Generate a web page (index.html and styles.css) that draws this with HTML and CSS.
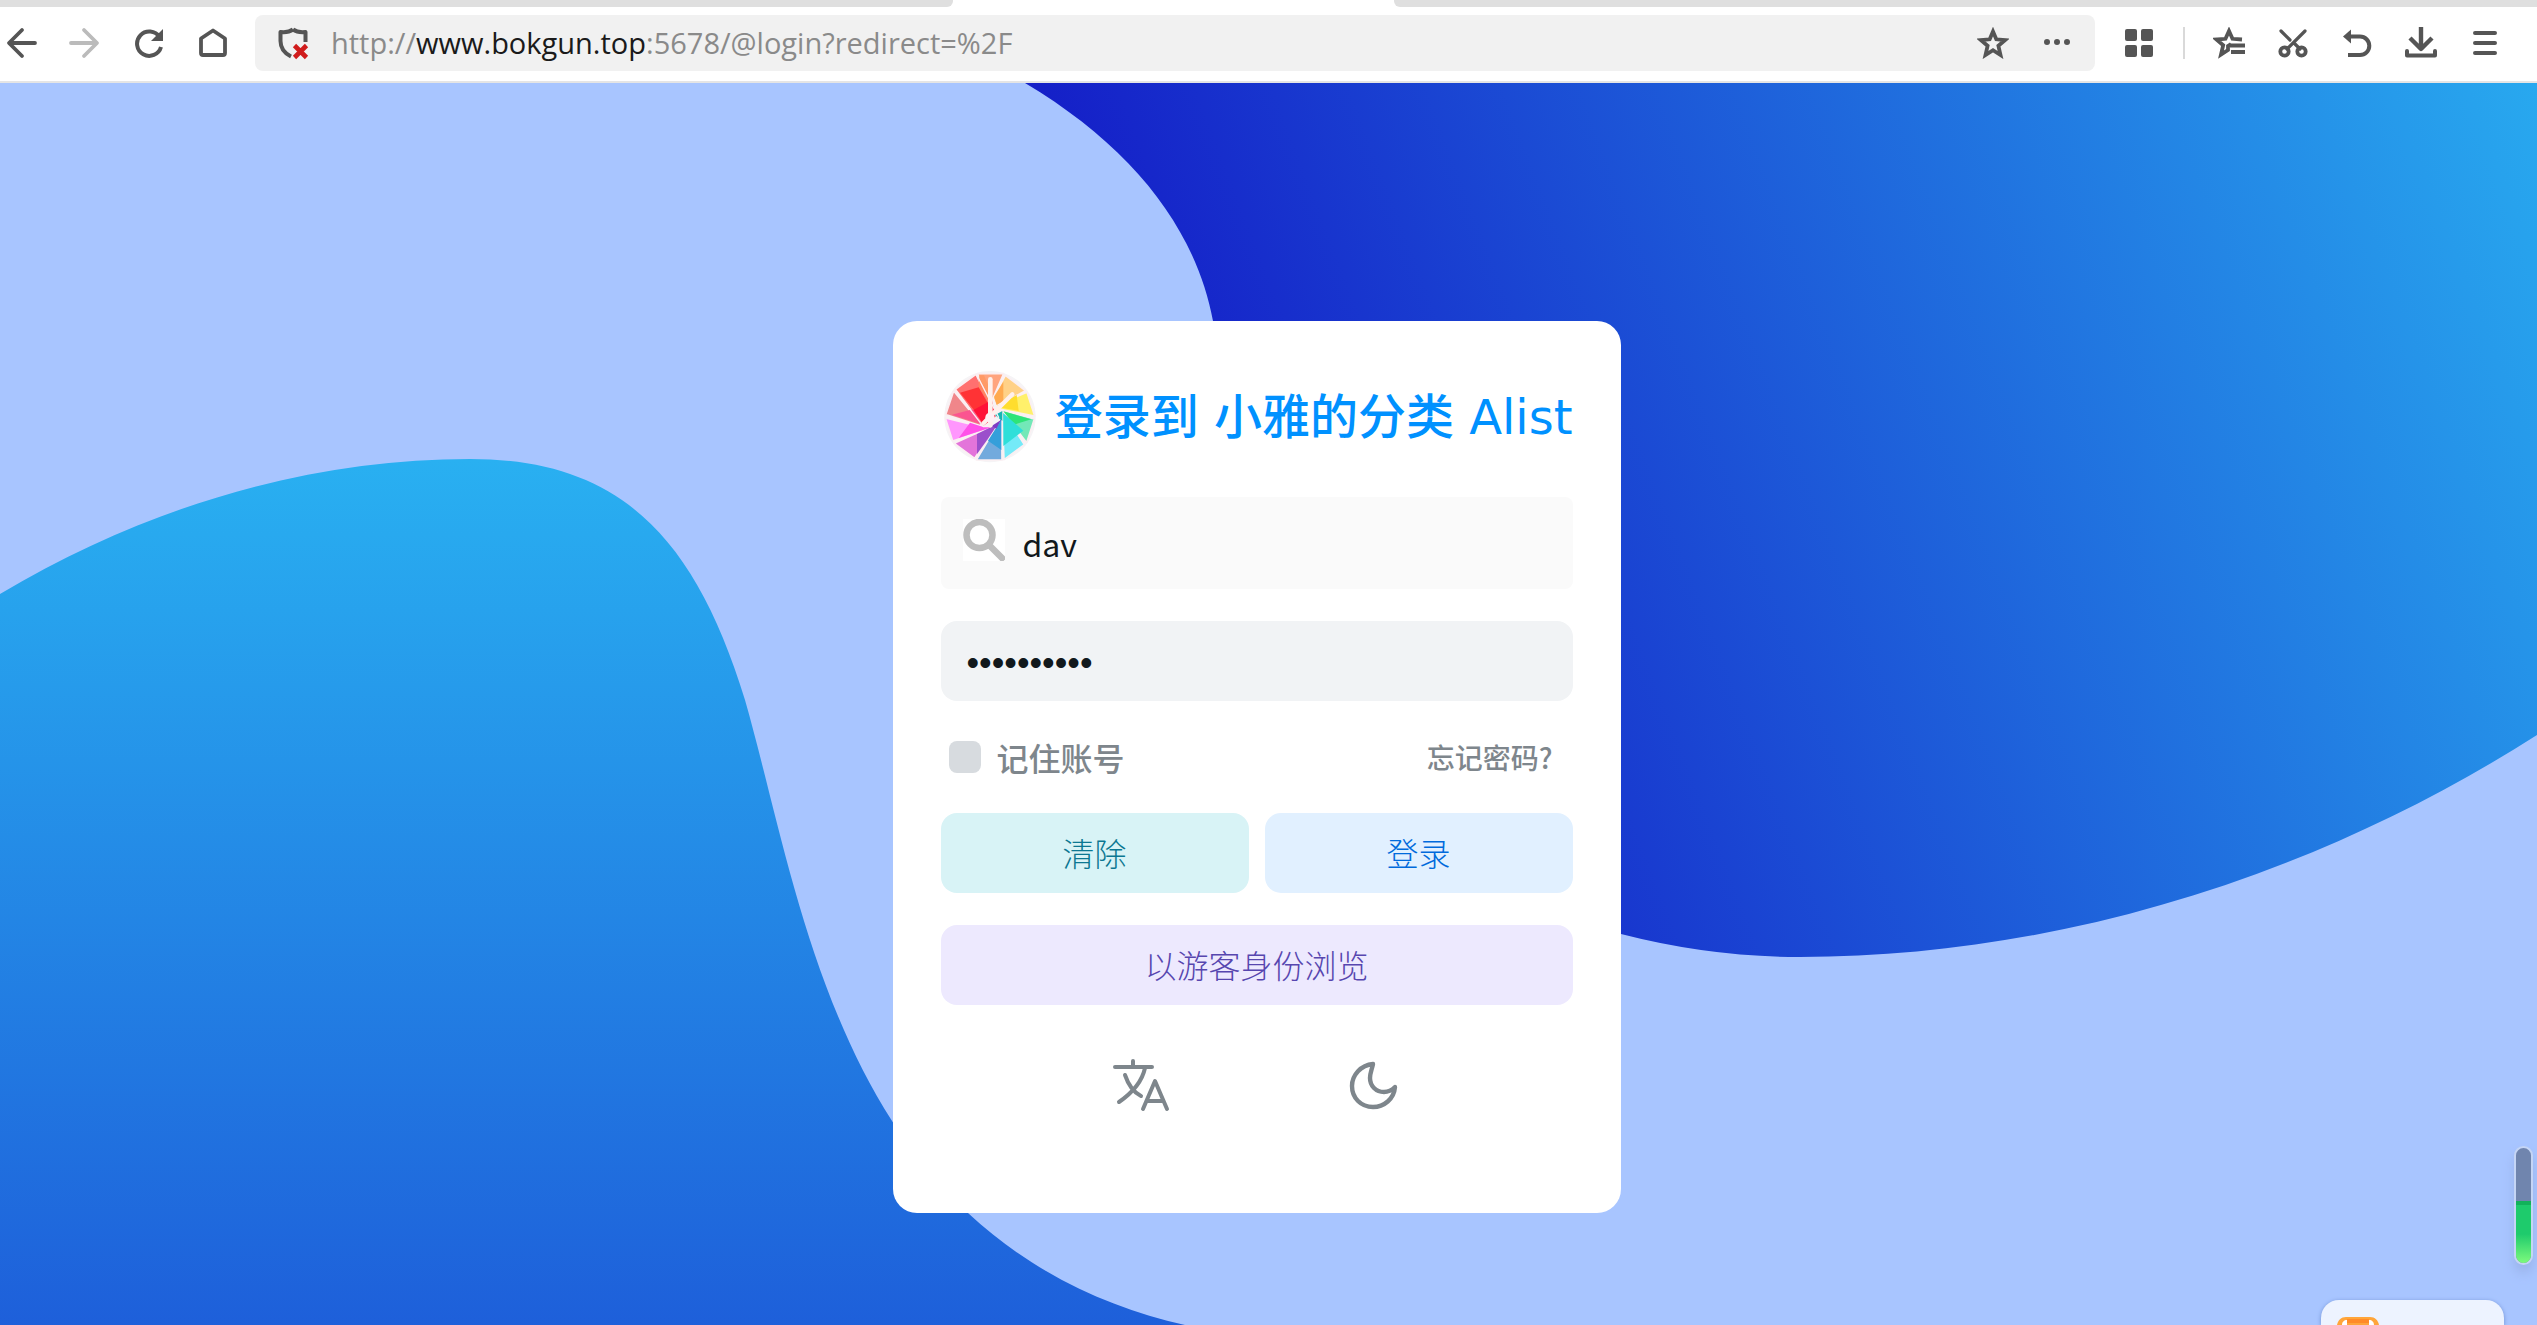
FILE: index.html
```html
<!DOCTYPE html>
<html lang="zh-CN">
<head>
<meta charset="utf-8">
<title>登录到 小雅的分类 Alist</title>
<link rel="stylesheet" href="styles.css">
</head>
<body>
<header class="browser">
  <div class="tabs"><div class="tab-rest tab-before"></div><div class="tab-rest tab-after"></div></div>
  <div class="toolbar">
    <nav class="nav" aria-label="导航">
      <button class="tool" type="button" aria-label="后退"><svg viewBox="0 0 32 32"><path d="M17 3 4 16l13 13M5 16h25" stroke-width="3.8"/></svg></button>
      <button class="tool disabled" type="button" aria-label="前进" disabled><svg viewBox="0 0 32 32"><path d="M15 3l13 13-13 13M27 16H2" stroke-width="3.8"/></svg></button>
      <button class="tool" type="button" aria-label="刷新"><svg viewBox="0 0 32 32"><path d="M26.500 10A12.200 12.200 0 1 0 28 20" stroke-width="4" stroke-linecap="butt"/><path class="solid" d="M30 2v12H18z"/></svg></button>
      <button class="tool" type="button" aria-label="主页"><svg viewBox="0 0 32 32"><path d="M4 11.500 16 3.500l12 8V26a2 2 0 0 1-2 2H6a2 2 0 0 1-2-2z" stroke-width="3.800"/></svg></button>
    </nav>
    <div class="address">
      <svg class="shield" viewBox="0 0 32 34"><path d="M16 3.500c-3.500 2.500-8 3-12.500 2.500V15c0 7 3.500 12 10.500 15.500" stroke-width="4" stroke-linecap="butt"/><path d="M16 3.500c3.500 2.500 8 3 12.500 2.500v10" stroke-width="4" stroke-linecap="butt"/><path class="cross" d="M17.500 19.500l12 12m0-12l-12 12" stroke-width="4.600" stroke-linecap="butt"/></svg>
      <p class="url">http://<span class="host">www.bokgun.top</span>:5678/@login?redirect=%2F</p>
      <button class="tool" type="button" aria-label="收藏"><svg viewBox="0 0 32 32"><path d="M16 4.500l3.300 7.800 8.700.8-6.600 5.700 2.100 9.200-7.500-4.800L8.500 28l2.100-9.200L4 13.100l8.700-.8z" stroke-width="3.800" stroke-linejoin="miter"/></svg></button>
      <button class="tool" type="button" aria-label="更多"><svg viewBox="0 0 32 32"><g class="solid"><circle cx="6" cy="15" r="3"/><circle cx="16" cy="15" r="3"/><circle cx="26" cy="15" r="3"/></g></svg></button>
    </div>
    <div class="actions">
      <button class="tool" type="button" aria-label="应用"><svg viewBox="0 0 32 32"><g class="solid"><rect x="2" y="2" width="12" height="12" rx="2"/><rect x="18" y="2" width="12" height="12" rx="2"/><rect x="2" y="18" width="12" height="12" rx="2"/><rect x="18" y="18" width="12" height="12" rx="2"/></g></svg></button>
      <span class="divider"></span>
      <button class="tool" type="button" aria-label="收藏夹"><svg viewBox="0 0 32 32"><path d="M29 12.500l-9.500-.7L16 4l-3.500 7.800-9 .7 6.700 5.700L8 27.500l7-4.500v-4l3-2" stroke-width="3.800" stroke-linejoin="miter" stroke-linecap="butt"/><path d="M17 18.500h15M18 25h14" stroke-width="4" stroke-linecap="butt"/></svg></button>
      <button class="tool" type="button" aria-label="截图"><svg viewBox="0 0 32 32"><path d="M4 4l9 9M28 4 10 22M17 16l6 6" stroke-width="3.200"/><circle cx="7.500" cy="24.500" r="4.200" stroke-width="3.800"/><circle cx="24.500" cy="24.500" r="4.200" stroke-width="3.800"/></svg></button>
      <button class="tool" type="button" aria-label="撤销"><svg viewBox="0 0 32 32"><path d="M8 9.500h11a9.300 9.300 0 0 1 0 18.600H7" stroke-width="4" stroke-linecap="butt"/><path class="solid" d="M10 2.500v14L2 9.500z"/></svg></button>
      <button class="tool" type="button" aria-label="下载"><svg viewBox="0 0 32 32"><path d="M16 0v22M5 11l11 11 11-11" stroke-width="4.400" stroke-linecap="butt"/><path d="M2 24v4.500h28V24" stroke-width="4"/></svg></button>
      <button class="tool" type="button" aria-label="菜单"><svg viewBox="0 0 32 32"><path d="M6 6h20M6 16h20M6 26h20" stroke-width="4"/></svg></button>
    </div>
  </div>
</header>

<main class="page">
  <svg class="backdrop" viewBox="0 83 2537 1242" preserveAspectRatio="none" aria-hidden="true">
    <defs>
      <linearGradient id="wave-left" gradientUnits="userSpaceOnUse" x1="0" y1="459" x2="0" y2="2005"><stop offset="0" stop-color="#29b0f1"/><stop offset="1" stop-color="#1520c8"/></linearGradient>
      <linearGradient id="wave-right" gradientUnits="userSpaceOnUse" x1="1040" y1="83" x2="2414" y2="-449"><stop offset="0" stop-color="#1520c8"/><stop offset="1" stop-color="#29b0f1"/></linearGradient>
    </defs>
    <path fill="url(#wave-left)" d="M0 594C150 505 310 459 470 459C620 459 695 537 745 700C788 850 820 1075 968 1213C1035 1275 1110 1308 1185 1325H0Z"/>
    <path fill="url(#wave-right)" d="M1025 83C1134 148 1196 230 1213 321C1235 520 1290 840 1621 934Q1710 957 1800 957C2050 957 2310 880 2537 735V83Z"/>
  </svg>

  <form class="card">
    <div class="heading">
      <svg class="logo" viewBox="63 57 288 288" aria-hidden="true">
        <circle cx="210" cy="200" r="137" fill="#f6f4f6"/>
        <g stroke="#fbeff2" stroke-width="5" stroke-linejoin="round">
          <path fill="#ffa47e" d="M173 71h78l-32 74-20 10z"/>
          <path fill="#ffd187" d="M256 76l60 46-86 48-10-26z"/>
          <path fill="#fff06b" d="M321 127l23 71-104-20-12-12z"/>
          <path fill="#73e8b8" d="M343 207l-23 71-75-98z"/>
          <path fill="#74eaf8" d="M313 284l-61 45-6-150z"/>
          <path fill="#72aadd" d="M246 330h-77l68-114 8-18z"/>
          <path fill="#e374da" d="M164 325l-61-45 128-58 8-8z"/>
          <path fill="#ff96fd" d="M98 273l-22-69 115 28 30 0z"/>
          <path fill="#f0868a" d="M77 194l24-71 88 107z"/>
          <path fill="#ff706f" d="M106 118l62-45 62 127-40 30z"/>
        </g>
        <path fill="#ff9a66" d="M178 76h14l22 50-8 30-28-50z"/>
        <path fill="#ff3335" d="M120 128l56-16 50 86-32 22z"/>
        <path fill="#ff8660" d="M176 80l38 70 8 30-46-70z"/>
        <path fill="#ffaa50" d="M222 140l28-45v58l-20 12z"/>
        <path fill="#ffdd2e" d="M238 165l52-30 6 48-52-10z"/>
        <path fill="#2ee478" d="M250 184l84 24-52 16z"/>
        <path fill="#2fdfd9" d="M250 190l60 52-60 46z"/>
        <path fill="#359fda" d="M244 200v100l-40-28 34-54z"/>
        <path fill="#9b4fcb" d="M171 252l64-32-32 48-32 44z"/>
        <path fill="#ff50e8" d="M116 264l34-46 42 14 22 0z"/>
        <path fill="#fb5590" d="M96 194l62-16 30 46z"/>
        <path fill="#ff1237" d="M160 180l56-30 10 50-34 26z"/>
        <path fill="#7e3cc4" d="M215 228l28-18-14 26z"/>
        <path fill="#18b5b0" d="M225 195l22-12v30z"/>
        <g fill="none" stroke="#fbeff2" stroke-width="4"><path d="M106 120l84 110M170 74l66 128"/></g>
        <g fill="none" stroke="#fff0ec" stroke-linecap="round"><path stroke-width="14" d="M211 88v138"/><path stroke-width="13" d="M277 133l-86 86"/></g>
        <circle cx="210" cy="202" r="14" fill="#fff0f4"/>
      </svg>
      <h1 class="title">登录到 小雅的分类 Alist</h1>
    </div>

    <div class="field field-user">
      <svg class="search" viewBox="0 0 42 42" aria-hidden="true"><rect width="42" height="42" fill="#fff" stroke="none"/><circle cx="16.500" cy="16" r="13" stroke-width="6.500"/><path d="M26 26l13 13" stroke-width="6.500"/></svg>
      <input class="input" type="text" value="dav" aria-label="用户名">
    </div>
    <input class="field input input-password" type="password" value="1234567890" aria-label="密码">

    <div class="options">
      <label class="remember"><input class="checkbox" type="checkbox">记住账号</label>
      <a class="forgot" href="#">忘记密码?</a>
    </div>

    <div class="pair">
      <button class="btn btn-clear" type="reset">清除</button>
      <button class="btn btn-login" type="submit">登录</button>
    </div>
    <button class="btn btn-guest" type="button">以游客身份浏览</button>

    <div class="switches">
      <button class="switch" type="button" aria-label="语言"><svg viewBox="0 0 64 64"><path d="M6 14h37M24 8v6M36 15C33 29 23 40 10 49M16 22c4 12 10 18 16 21M34 56l12-28 12 28M38 48h16" stroke-width="4"/></svg></button>
      <button class="switch" type="button" aria-label="夜间模式"><svg viewBox="0 0 64 64"><path d="M32 11C20 12 11 22 11 33c0 12 9 21 21 21 11 0 21-8 22-20-3 3-7 5-11 5-8 0-14-6-14-14 0-5 2-9 3-14z" stroke-width="4.400"/></svg></button>
    </div>
  </form>

  <div class="battery"><div class="charge"></div></div>
  <div class="widget">
    <svg class="widget-icon" viewBox="0 0 42 8" aria-hidden="true"><path fill="#ffa53a" d="M0 8C1 3 4 0 9 0h24c5 0 8 3 9 8z"/><path fill="#fff" d="M5 8c0-3 2-5 5-5v5zM32 3c3 0 5 2 5 5h-5z"/><path fill="#ff8b28" d="M10 2h22v4H10z"/></svg>
  </div>
</main>
</body>
</html>
```
FILE: styles.css
```css
* { box-sizing: border-box; }

body {
  margin: 0;
  min-height: 100vh;
  display: flex;
  flex-direction: column;
  background: #a8c5ff;
  font-family: "Noto Sans CJK SC", "Noto Sans", sans-serif;
}

button, input { font: inherit; border: 0; margin: 0; padding: 0; }
button { cursor: pointer; }
svg { display: block; fill: none; stroke-linecap: round; stroke-linejoin: round; }

/* Browser bar */
.browser { background: #fff; border-bottom: 2px solid #e5e5e5; }
.tabs { display: flex; justify-content: space-between; height: 7px; }
.tab-rest { background: #dfdfdf; }
.tab-before { width: 953px; border-bottom-right-radius: 6px; }
.tab-after { width: calc(100% - 1394px); border-bottom-left-radius: 6px; }
.toolbar { display: flex; align-items: center; height: 74px; padding: 0 36px 2px 5px; }
.nav, .actions { display: flex; align-items: center; gap: 32px; }
.tool { width: 32px; height: 32px; background: none; flex: none; }
.tool svg { width: 32px; height: 32px; stroke: #555; }
.disabled svg { stroke: #bbb; }
.tool .solid { fill: #555; stroke: none; }
.address {
  flex: 1;
  display: flex;
  align-items: center;
  gap: 32px;
  height: 56px;
  margin: 0 28px 0 26px;
  padding: 0 22px;
  border-radius: 8px;
  background: #f1f1f1;
}
.shield { width: 32px; height: 34px; stroke: #555; margin-right: -10px; }
.shield .cross { stroke: #d01c1c; }
.url { flex: 1; margin: 0; font: 29px/40px "Open Sans", "Noto Sans", sans-serif; color: #8a8a8a; white-space: nowrap; }
.host { color: #1a1a1a; }
.divider { width: 2px; height: 32px; background: #d9d9d9; margin: 0 -4px; }

/* Page */
.page {
  position: relative;
  flex: 1;
  display: flex;
  justify-content: center;
  align-items: flex-start;
  padding: 238px 24px 112px 0;
  overflow: hidden;
}
.backdrop { position: absolute; inset: 0; width: 100%; height: 100%; }

.card {
  position: relative;
  display: flex;
  flex-direction: column;
  gap: 32px;
  width: 728px;
  padding: 48px;
  border-radius: 24px;
  background: #fff;
  font-size: 32px;
  line-height: 48px;
}
.heading { display: flex; align-items: center; justify-content: space-between; height: 96px; }
.logo { width: 96px; height: 96px; }
.title {
  margin: 0;
  font-family: "DejaVu Sans", "Noto Sans CJK SC", sans-serif;
  font-size: 48px;
  line-height: 64px;
  font-weight: 500;
  color: #0091ff;
  white-space: nowrap;
}

.field { width: 100%; }
.field-user {
  display: flex;
  align-items: center;
  gap: 18px;
  height: 92px;
  padding: 0 22px;
  border-radius: 8px;
  background: #fafafa;
}
.search { width: 42px; height: 42px; margin-bottom: 6px; stroke: #bdbdbd; }
.input { flex: 1; min-width: 0; background: transparent; color: #11181c; outline: 0; }
.input-password {
  flex: none;
  height: 80px;
  padding: 4px 26px 0;
  border-radius: 16px;
  background: #f1f3f5;
  font-family: "Liberation Sans", sans-serif;
  font-size: 36px;
}

.options { display: flex; align-items: center; justify-content: space-between; padding: 0 20px 0 8px; color: #7e868c; font-weight: 500; }
.remember { display: flex; align-items: center; gap: 16px; }
.checkbox { appearance: none; width: 32px; height: 32px; border-radius: 8px; background: #d7dbdf; }
.forgot { font-size: 28px; color: inherit; text-decoration: none; }

.pair { display: grid; grid-template-columns: 1fr 1fr; gap: 16px; }
.btn { height: 80px; padding-bottom: 2px; border-radius: 16px; font-weight: 300; }
.btn-clear { background: #d8f3f6; color: #0c7792; }
.btn-login { background: #e1f0ff; color: #006adc; }
.btn-guest { background: #ede9fe; color: #5746af; }

.switches { display: flex; justify-content: space-evenly; padding: 16px 0 48px; }
.switch { width: 64px; height: 64px; background: none; }
.switch svg { width: 64px; height: 64px; stroke: #7e868c; }

/* Desktop gadgets at the window's corner */
.battery {
  position: absolute;
  right: 4px;
  bottom: 60px;
  width: 19px;
  height: 119px;
  display: flex;
  align-items: flex-end;
  border: 2px solid #c5d5f5;
  border-radius: 10px;
  background: #7085ae;
  box-shadow: 0 8px 12px #9ab3ea;
  overflow: hidden;
}
.charge { width: 100%; height: 62px; border-top: 4px solid #12b25a; background: linear-gradient(#1ecb6c 50%, #7dfa7d); }
.widget {
  position: absolute;
  right: 33px;
  bottom: 0;
  width: 183px;
  height: 25px;
  padding: 17px 16px 0;
  border-radius: 18px 18px 0 0;
  background: #edf3ff;
  box-shadow: 0 1px 4px #6f8fd0;
}
.widget-icon { width: 42px; height: 8px; }
```
